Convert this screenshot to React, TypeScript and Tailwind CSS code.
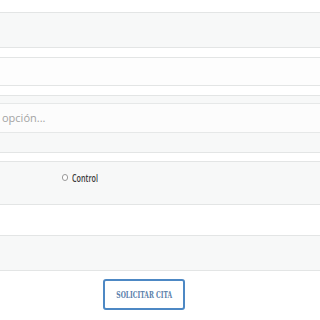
import React from 'react';

const band = 'border-y border-[#e3e5e5] bg-[#f7f8f8]';

export default function App() {
  return (
    <div className="w-[320px] h-[320px] bg-white overflow-hidden flex flex-col" style={{ fontFamily: '"Open Sans", "Liberation Sans", sans-serif' }}>
      <div className="h-[12px] shrink-0" />
      <div className={`h-[36px] shrink-0 ${band}`} />
      <div className="h-[9px] shrink-0" />
      <div className="h-[29px] shrink-0 border-y border-[#e3e5e5] bg-[#fdfdfd]" />
      <div className="h-[9px] shrink-0" />
      {/* select block */}
      <div className={`h-[58px] shrink-0 flex flex-col pt-[7px] ${band}`}>
        <div className="h-[30px] border-y border-[#e6e8e8] bg-[#fcfcfc] flex items-center pl-[2px] text-[11px] text-[#a3a3a3]">
          opción...
        </div>
      </div>
      <div className="h-[8px] shrink-0" />
      {/* radio block */}
      <div className={`h-[44px] shrink-0 flex items-start pt-[10px] pl-[62px] ${band}`}>
        <span className="w-[6px] h-[7px] mt-[2px] shrink-0 rounded-full border border-[#9a9a9a] bg-white" />
        <span className="ml-[4px] inline-block origin-left scale-x-[0.72] text-[10px] leading-[12px] font-semibold text-[#3a3a3a]">Control</span>
      </div>
      <div className="h-[30px] shrink-0" />
      <div className={`h-[36px] shrink-0 ${band}`} />
      <div className="h-[8px] shrink-0" />
      <div className="flex pl-[103px]">
        <button className="w-[82px] h-[31px] rounded-[3px] border-2 border-[#4d88c4] bg-white flex items-center justify-center">
          <span className="inline-block scale-x-[0.66] whitespace-nowrap text-[10px] font-bold text-[#5a80aa]" style={{ fontFamily: '"DejaVu Serif Condensed", "DejaVu Serif", serif' }}>
            SOLICITAR CITA
          </span>
        </button>
      </div>
    </div>
  );
}
